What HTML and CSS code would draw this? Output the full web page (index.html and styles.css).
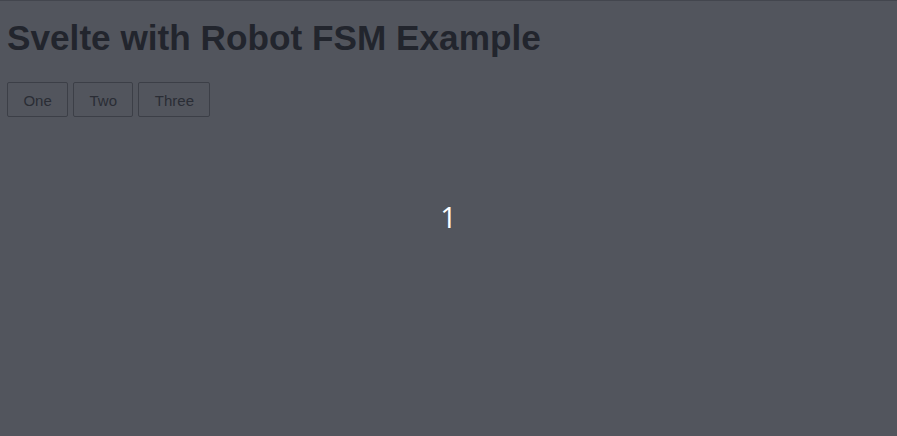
FILE: index.html
```html
<!DOCTYPE html>
<html>
<head>
<meta charset="utf-8">
<link rel="stylesheet" href="styles.css">
</head>
<body>
<main class="app">
  <h1 class="title">Svelte with Robot FSM Example</h1>
  <div class="buttons">
    <button class="btn">One</button>
    <button class="btn">Two</button>
    <button class="btn">Three</button>
  </div>
  <div class="stage">
    <div class="value">1</div>
  </div>
</main>
</body>
</html>
```
FILE: styles.css
```css
html, body {
  margin: 0;
  height: 100%;
}
body {
  background: #52555d;
  border-top: 1px solid #43464e;
  box-sizing: border-box;
  font-family: "Liberation Sans", Arial, sans-serif;
  overflow: hidden;
}
.app {
  padding: 0 7px;
  display: flex;
  flex-direction: column;
  height: 100%;
  box-sizing: border-box;
}
.title {
  margin: 16px 0 0;
  font-size: 35.2px;
  line-height: 42px;
  font-weight: bold;
  color: #22252d;
}
.buttons {
  display: flex;
  gap: 5px;
  margin-top: 23px;
}
.btn {
  font-family: inherit;
  font-size: 15px;
  color: #2a2d35;
  background: transparent;
  border: 1px solid #3c3f47;
  border-radius: 2px;
  height: 35px;
  padding: 1px 15.4px 0;
  margin: 0;
}
.stage {
  display: flex;
  justify-content: center;
  padding-top: 80px;
}
.value {
  font-family: "Open Sans", sans-serif;
  font-size: 29px;
  line-height: 40px;
  color: #ffffff;
}
```
